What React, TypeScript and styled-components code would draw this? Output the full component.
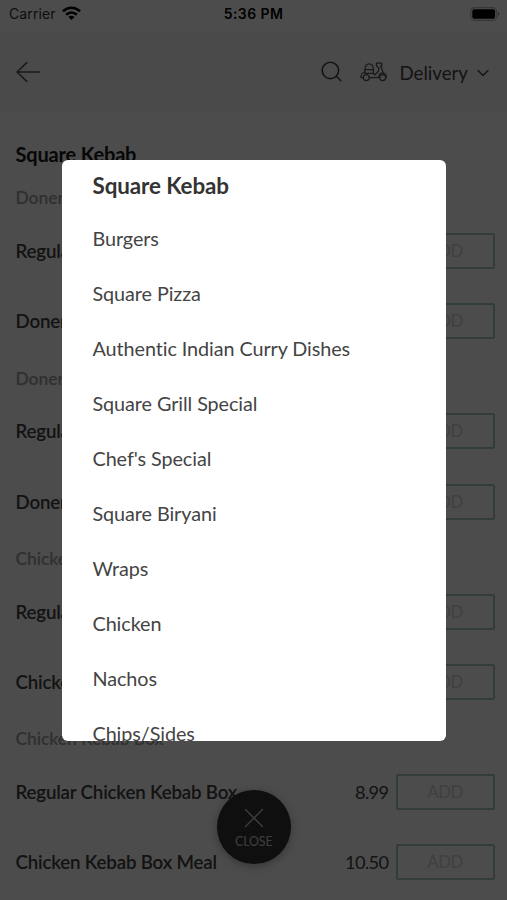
import React from "react";
import styled, { createGlobalStyle } from "styled-components";

const GlobalStyle = createGlobalStyle`
  * { box-sizing: border-box; }
  body { margin: 0; background: #fff; font-family: Lato, sans-serif; font-variant-ligatures: none; overflow: hidden; }
`;

const Screen = styled.main`
  position: relative;
  width: 507px;
  height: 900px;
  overflow: hidden;
  background: #fff;
`;

const StatusBar = styled.div`
  display: grid;
  grid-template-columns: 1fr auto 1fr;
  align-items: center;
  height: 32px;
  padding: 0 7px 4px 9px;
  color: #000;
  font: 400 14px/20px Inter, sans-serif;
`;

const Carrier = styled.div`
  display: flex;
  align-items: center;
  gap: 6px;
  color: #303030;
  letter-spacing: 0.1px;
`;

const Clock = styled.div`
  font-weight: 600;
  font-size: 14px;
  letter-spacing: 0.4px;
  margin-left: -2px;
`;

const Battery = styled.svg`
  justify-self: end;
  margin-bottom: 1px;
`;

const Signal = styled.svg`
  margin-bottom: 2px;
`;

const Header = styled.header`
  display: flex;
  align-items: center;
  justify-content: space-between;
  height: 80px;
  padding: 0 17px 0 15px;
  background: #f8f8f8;
`;

const HeaderActions = styled.div`
  display: flex;
  align-items: center;
  color: #444;
`;

const SearchIcon = styled.svg`
  margin-right: 17px;
`;

const Mode = styled.span`
  margin: 1px 8px 0 11px;
  font-size: 18.7px;
  line-height: 24px;
`;

const Menu = styled.section`
  height: 788px;
  padding: 30px 12.5px 0 15.5px;
  background: #fdfdfd;
`;

const MenuTitle = styled.h1`
  margin: 0;
  height: 34.4px;
  font-size: 20px;
  line-height: 24px;
  font-weight: 700;
  letter-spacing: -0.18px;
  color: #181818;
`;

const GroupTitle = styled.h2`
  margin: 0;
  height: 39.6px;
  padding-top: 10px;
  font-size: 17.5px;
  line-height: 24px;
  font-weight: 600;
  letter-spacing: -0.1px;
  color: #a0a0a0;
`;

const Item = styled.div`
  display: flex;
  align-items: center;
  height: 70.3px;
`;

const ItemName = styled.span`
  flex: 1;
  font-size: 18.7px;
  font-weight: 600;
  line-height: 24px;
  letter-spacing: -0.18px;
  color: #404040;
`;

const Price = styled.span`
  margin-right: 7px;
  font-size: 18.2px;
  line-height: 24px;
  letter-spacing: -0.6px;
  color: #404040;
`;

const AddButton = styled.button`
  width: 99px;
  height: 36px;
  padding: 0;
  border: 2px solid #a8ccbc;
  border-radius: 2px;
  background: transparent;
  color: #d2d8d2;
  font: 400 16.7px/24px Lato, sans-serif;
  letter-spacing: -0.4px;
`;

const CloseButton = styled.button`
  position: absolute;
  left: 217px;
  top: 790px;
  width: 73.5px;
  height: 73.5px;
  display: flex;
  flex-direction: column;
  align-items: center;
  padding: 18px 0 0;
  border: 0;
  border-radius: 50%;
  background: #343434;
  color: #d0d0d0;
  box-shadow: 0 2px 8px rgba(0, 0, 0, 0.3);
  font: 400 12.4px/16px Lato, sans-serif;
  letter-spacing: -0.1px;
`;

const CloseLabel = styled.span`
  margin-top: 6px;
`;

const Backdrop = styled.div`
  position: absolute;
  inset: 0;
  background: rgba(0, 0, 0, 0.7);
`;

const Dialog = styled.div`
  position: absolute;
  left: 62px;
  top: 159.5px;
  width: 384px;
  height: 581.7px;
  padding: 0 30.5px;
  border-radius: 6px;
  background: #fff;
  overflow: hidden;
`;

const Category = styled.div<{ $active?: boolean }>`
  display: flex;
  align-items: center;
  height: ${(p) => (p.$active ? "51px" : "55px")};
  padding-top: ${(p) => (p.$active ? "1.5px" : "0")};
  color: ${(p) => (p.$active ? "#333" : "#444")};
  font-size: ${(p) => (p.$active ? "22.4px" : "19.8px")};
  font-weight: ${(p) => (p.$active ? 700 : 400)};
  letter-spacing: ${(p) => (p.$active ? "-0.1px" : "-0.07px")};
`;

const groups = [
  { title: "Doner Kebab", items: [["Regular Doner Kebab", "7.99"], ["Doner Kebab Meal", "9.50"]] },
  { title: "Doner Kebab Box", items: [["Regular Doner Kebab Box", "8.99"], ["Doner Kebab Box Meal", "10.50"]] },
  { title: "Chicken Kebab", items: [["Regular Chicken Kebab", "7.99"], ["Chicken Kebab Meal", "9.50"]] },
  { title: "Chicken Kebab Box", items: [["Regular Chicken Kebab Box", "8.99"], ["Chicken Kebab Box Meal", "10.50"]] },
];

const categories = [
  "Square Kebab",
  "Burgers",
  "Square Pizza",
  "Authentic Indian Curry Dishes",
  "Square Grill Special",
  "Chef's Special",
  "Square Biryani",
  "Wraps",
  "Chicken",
  "Nachos",
  "Chips/Sides",
];

export default function App() {
  return (
    <Screen>
      <GlobalStyle />
      <StatusBar>
        <Carrier>
          Carrier
          <Signal width="19" height="15" viewBox="0 0 19 15" fill="none" stroke="#000" strokeWidth="2.6">
            <path d="M1 5.4C6 .6 13 .6 18 5.4M4.2 8.7c3-2.9 7.6-2.9 10.6 0" />
            <path d="M9.5 14 6.4 10.9c1.8-1.7 4.4-1.7 6.2 0Z" fill="#000" stroke="none" />
          </Signal>
        </Carrier>
        <Clock>5:36 PM</Clock>
        <Battery width="30" height="14" viewBox="0 0 30 14">
          <rect x=".7" y=".7" width="26" height="12.6" rx="3.8" fill="none" stroke="#b8b8b8" strokeWidth="1.2" />
          <rect x="2.3" y="2.3" width="22.8" height="9.4" rx="2" fill="#000" />
          <path d="M28 5v4c1.8-.6 1.8-3.4 0-4Z" fill="#909090" />
        </Battery>
      </StatusBar>
      <Header>
        <svg width="26" height="22" viewBox="0 0 26 22" fill="none" stroke="#555" strokeWidth="1.6" strokeLinecap="round" strokeLinejoin="round">
          <path d="M24.5 11H2M11.8 1.7 2 11l9.800 9.300" />
        </svg>
        <HeaderActions>
          <SearchIcon width="22" height="22" viewBox="0 0 22 22" fill="none" stroke="currentColor" strokeWidth="1.6" strokeLinecap="round">
            <circle cx="9.4" cy="9.4" r="8.2" />
            <path d="m15.3 15.3 4.500 4.500" />
          </SearchIcon>
          <svg width="28" height="20" viewBox="0 0 28 20" fill="none" stroke="#555" strokeWidth="1.25" strokeLinecap="round" strokeLinejoin="round">
            <path d="M5 7.500C5.200 3.700 6.900 1.900 9.200 1.900S13.200 3.700 13.400 7.500Z" />
            <path d="M5 7.500v3.800h8.400V7.500M5 9.500C2.500 10.500 1.100 12.600.8 15.500h2.500" />
            <circle cx="6.300" cy="15.500" r="3" />
            <path d="M9.300 15.500h9.200c.3-2.700 2.200-4.500 4.600-4.300 1.900.2 3.300 1.900 3.200 4.300" />
            <path d="M16.500 1h5.200v3.200h-1l2.800 7M16.500 1v3l2.300 1.700-.4 3.600-3.800 3.700-1.200-1.700" />
            <circle cx="22.700" cy="15.500" r="3" />
          </svg>
          <Mode>Delivery</Mode>
          <svg width="14" height="10" viewBox="0 0 14 10" fill="none" stroke="currentColor" strokeWidth="1.5" strokeLinecap="round" strokeLinejoin="round">
            <path d="m2 3.500 5 5 5-5" />
          </svg>
        </HeaderActions>
      </Header>
      <Menu>
        <MenuTitle>Square Kebab</MenuTitle>
        {groups.map((group) => (
          <React.Fragment key={group.title}>
            <GroupTitle>{group.title}</GroupTitle>
            {group.items.map(([name, price]) => (
              <Item key={name}>
                <ItemName>{name}</ItemName>
                <Price>{price}</Price>
                <AddButton>ADD</AddButton>
              </Item>
            ))}
          </React.Fragment>
        ))}
      </Menu>
      <CloseButton>
        <svg width="20" height="20" viewBox="0 0 20 20" fill="none" stroke="currentColor" strokeWidth="1.4" strokeLinecap="round">
          <path d="m1.500 1.500 17 17M18.500 1.500l-17 17" />
        </svg>
        <CloseLabel>CLOSE</CloseLabel>
      </CloseButton>
      <Backdrop />
      <Dialog>
        {categories.map((name, index) => (
          <Category key={name} $active={index === 0}>{name}</Category>
        ))}
      </Dialog>
    </Screen>
  );
}
